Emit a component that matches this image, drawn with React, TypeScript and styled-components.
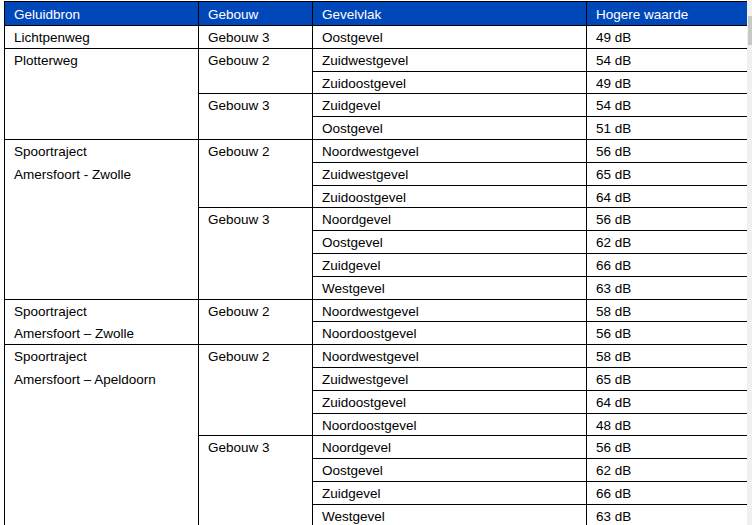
import React from 'react';
import styled, { createGlobalStyle } from 'styled-components';

interface Facade {
  name: string;
  value: number;
}

interface Building {
  name: string;
  facades: Facade[];
}

interface Source {
  lines: string[];
  buildings: Building[];
}

const sources: Source[] = [
  {
    lines: ['Lichtpenweg'],
    buildings: [{ name: 'Gebouw 3', facades: [{ name: 'Oostgevel', value: 49 }] }],
  },
  {
    lines: ['Plotterweg'],
    buildings: [
      {
        name: 'Gebouw 2',
        facades: [
          { name: 'Zuidwestgevel', value: 54 },
          { name: 'Zuidoostgevel', value: 49 },
        ],
      },
      {
        name: 'Gebouw 3',
        facades: [
          { name: 'Zuidgevel', value: 54 },
          { name: 'Oostgevel', value: 51 },
        ],
      },
    ],
  },
  {
    lines: ['Spoortraject', 'Amersfoort - Zwolle'],
    buildings: [
      {
        name: 'Gebouw 2',
        facades: [
          { name: 'Noordwestgevel', value: 56 },
          { name: 'Zuidwestgevel', value: 65 },
          { name: 'Zuidoostgevel', value: 64 },
        ],
      },
      {
        name: 'Gebouw 3',
        facades: [
          { name: 'Noordgevel', value: 56 },
          { name: 'Oostgevel', value: 62 },
          { name: 'Zuidgevel', value: 66 },
          { name: 'Westgevel', value: 63 },
        ],
      },
    ],
  },
  {
    lines: ['Spoortraject', 'Amersfoort – Zwolle'],
    buildings: [
      {
        name: 'Gebouw 2',
        facades: [
          { name: 'Noordwestgevel', value: 58 },
          { name: 'Noordoostgevel', value: 56 },
        ],
      },
    ],
  },
  {
    lines: ['Spoortraject', 'Amersfoort – Apeldoorn'],
    buildings: [
      {
        name: 'Gebouw 2',
        facades: [
          { name: 'Noordwestgevel', value: 58 },
          { name: 'Zuidwestgevel', value: 65 },
          { name: 'Zuidoostgevel', value: 64 },
          { name: 'Noordoostgevel', value: 48 },
        ],
      },
      {
        name: 'Gebouw 3',
        facades: [
          { name: 'Noordgevel', value: 56 },
          { name: 'Oostgevel', value: 62 },
          { name: 'Zuidgevel', value: 66 },
          { name: 'Westgevel', value: 63 },
        ],
      },
    ],
  },
];

const columns = [194, 114, 274, 162];

const GlobalStyle = createGlobalStyle`
  html, body {
    margin: 0;
    padding: 0;
    background: #ffffff;
  }
`;

const Page = styled.div`
  display: flex;
  width: 752px;
  height: 525px;
  overflow: hidden;
  font-family: "Liberation Sans", Arial, sans-serif;
  font-size: 13.5px;
  color: #000000;
`;

const TableArea = styled.div`
  flex: 1;
  padding: 1px 0 0 4px;
  overflow: hidden;
`;

const ScrollTrack = styled.div`
  width: 5px;
  flex-shrink: 0;
  background: #f0f0f0;
  padding-top: 16px;
`;

const ScrollThumb = styled.div`
  height: 29px;
  margin-left: 1px;
  background: #c8c8c8;
`;

const Table = styled.table`
  border-collapse: collapse;
  table-layout: fixed;
  width: 744px;
`;

const HeadCell = styled.th`
  height: 20px;
  padding: 3px 9px 0;
  background: #0048ba;
  color: #ffffff;
  font-weight: normal;
  text-align: left;
  border: 1px solid #000000;
  line-height: 20px;
  white-space: nowrap;
  overflow: hidden;
`;

const Row = styled.tr`
  height: 22.8px;
`;

const Cell = styled.td`
  padding: 3px 9px 0;
  vertical-align: top;
  border: 1px solid #000000;
  line-height: 18.8px;
  white-space: nowrap;
  overflow: hidden;
`;

const CellLine = styled.div`
  height: 22.8px;
  line-height: 18.8px;

  &:last-child {
    height: 18.8px;
  }
`;

export default function App() {
  const rows: React.ReactNode[] = [];

  sources.forEach((source, si) => {
    const sourceSpan = source.buildings.reduce((n, b) => n + b.facades.length, 0);
    source.buildings.forEach((building, bi) => {
      building.facades.forEach((facade, fi) => {
        rows.push(
          <Row key={`${si}-${bi}-${fi}`}>
            {bi === 0 && fi === 0 && (
              <Cell rowSpan={sourceSpan}>
                {source.lines.map((line) => (
                  <CellLine key={line}>{line}</CellLine>
                ))}
              </Cell>
            )}
            {fi === 0 && <Cell rowSpan={building.facades.length}>{building.name}</Cell>}
            <Cell>{facade.name}</Cell>
            <Cell>{facade.value} dB</Cell>
          </Row>
        );
      });
    });
  });

  return (
    <>
      <GlobalStyle />
      <Page>
        <TableArea>
          <Table>
            <colgroup>
              {columns.map((w, i) => (
                <col key={i} style={{ width: w }} />
              ))}
            </colgroup>
            <thead>
              <tr>
                <HeadCell>Geluidbron</HeadCell>
                <HeadCell>Gebouw</HeadCell>
                <HeadCell>Gevelvlak</HeadCell>
                <HeadCell>Hogere waarde</HeadCell>
              </tr>
            </thead>
            <tbody>{rows}</tbody>
          </Table>
        </TableArea>
        <ScrollTrack>
          <ScrollThumb />
        </ScrollTrack>
      </Page>
    </>
  );
}
